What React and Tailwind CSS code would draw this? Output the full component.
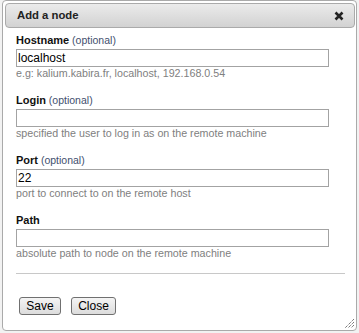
import React, { useState } from "react";

const fields = [
  { key: "hostname", label: "Hostname", optional: true, value: "localhost", help: "e.g: kalium.kabira.fr, localhost, 192.168.0.54" },
  { key: "login", label: "Login", optional: true, value: "", help: "specified the user to log in as on the remote machine" },
  { key: "port", label: "Port", optional: true, value: "22", help: "port to connect to on the remote host" },
  { key: "path", label: "Path", optional: false, value: "", help: "absolute path to node on the remote machine" },
];

function Field({ field, value, onChange }) {
  return (
    <div className="mb-[13px]">
      <div className="h-[14px] leading-[14px] text-[11px] text-[#111] whitespace-nowrap">
        <span className="font-bold">{field.label}</span>
        {field.optional && <span className="text-[10.5px] text-[#3f4f6e]"> (optional)</span>}
      </div>
      <input
        type="text"
        value={value}
        onChange={(e) => onChange(field.key, e.target.value)}
        className="block mt-[2px] w-[313px] h-[18px] px-[1px] border border-[#a3a3a3] bg-white text-[12px] leading-[16px] text-black outline-none"
      />
      <div className="h-[13px] leading-[13px] text-[10.7px] text-[#808080] whitespace-nowrap">{field.help}</div>
    </div>
  );
}

export default function App() {
  const [values, setValues] = useState(
    Object.fromEntries(fields.map((f) => [f.key, f.value]))
  );

  const handleChange = (key, val) => setValues({ ...values, [key]: val });

  return (
    <div className="w-[359px] h-[333px] bg-[#f2f2f2] overflow-hidden font-['Liberation_Sans',Arial,sans-serif]">
      {/* Dialog */}
      <div className="relative ml-[2px] w-[355px] h-[331px] pt-[2px] pl-[2px] pr-[1px] bg-white border border-[#aaaaaa] rounded-[4px]">
        {/* Title bar */}
        <div className="flex items-center justify-between h-[25px] pl-[11px] pr-[10px] border border-[#aaaaaa] rounded-[4px] bg-gradient-to-b from-[#ebebeb] to-[#d2d2d2]">
          <span className="text-[11.3px] font-bold text-[#222222]">Add a node</span>
          <svg width="10" height="10" viewBox="0 0 10 10">
            <path d="M1.5 1.5 L8.5 8.5 M8.5 1.5 L1.5 8.5" stroke="#222222" strokeWidth="2.6" strokeLinecap="butt" />
          </svg>
        </div>

        {/* Content */}
        <div className="pt-[5px] pl-[11px]">
          {fields.map((f) => (
            <Field key={f.key} field={f} value={values[f.key]} onChange={handleChange} />
          ))}
          <div className="mt-[6px] w-[329px] h-px bg-[#c8c8c8]" />

          {/* Buttons */}
          <div className="flex gap-[10px] mt-[23px] ml-[3px]">
            <button className="h-[18px] w-[42px] border border-[#707070] rounded-[3px] bg-gradient-to-b from-[#f4f4f4] to-[#dcdcdc] text-[12px] leading-[16px] text-black">
              Save
            </button>
            <button className="h-[18px] w-[45px] border border-[#707070] rounded-[3px] bg-gradient-to-b from-[#f4f4f4] to-[#dcdcdc] text-[12px] leading-[16px] text-black">
              Close
            </button>
          </div>
        </div>

        {/* Resize grip */}
        <svg className="absolute right-[1px] bottom-[1px]" width="12" height="12" viewBox="0 0 12 12">
          <path d="M11 2 L2 11 M11 5 L5 11 M11 8 L8 11" stroke="#444444" strokeWidth="1" strokeDasharray="1 1" />
        </svg>
      </div>
    </div>
  );
}
